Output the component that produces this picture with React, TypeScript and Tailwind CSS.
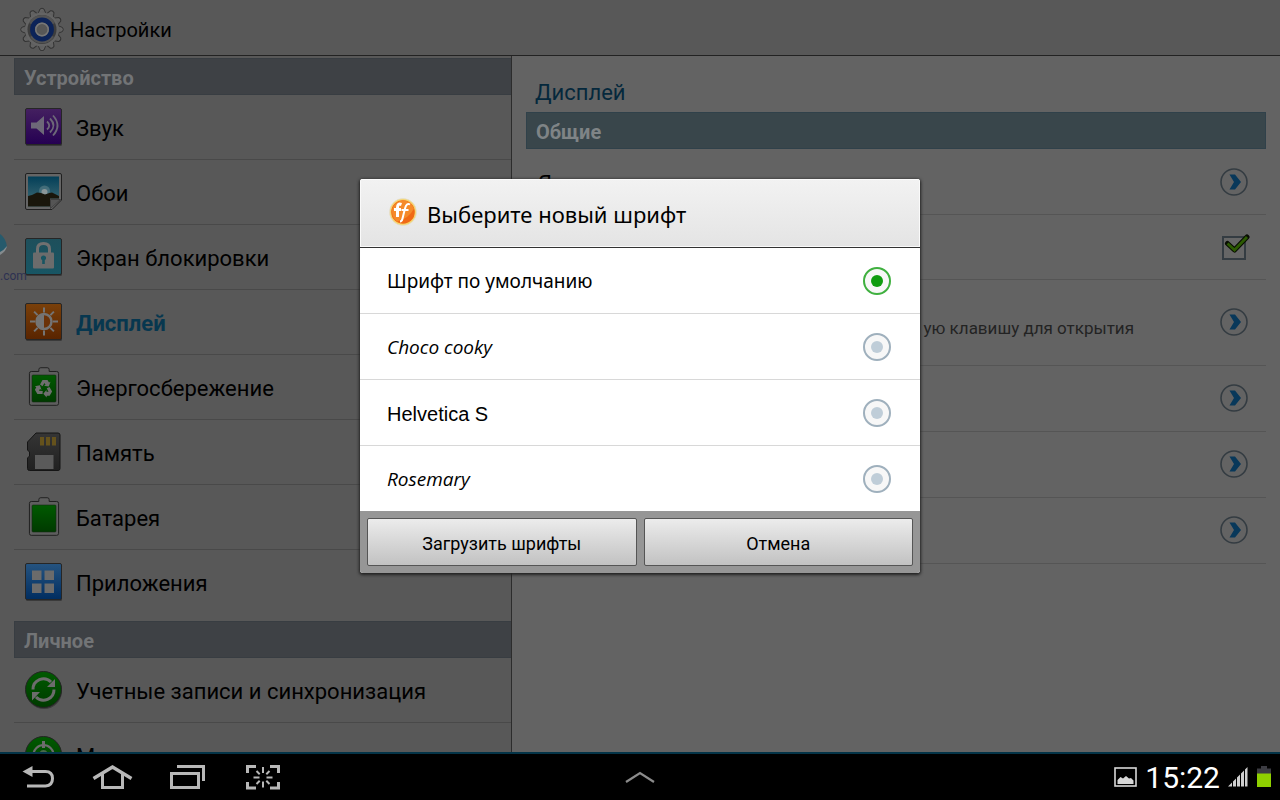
import { useState } from "react";
import type { ReactNode } from "react";

function GearIcon() {
  return (
    <svg width="44" height="44" viewBox="0 0 44 44" aria-hidden="true">
      <defs>
        <linearGradient id="gear" x1="0" y1="0" x2="1" y2="1">
          <stop offset="0" stopColor="#6a6a6a" />
          <stop offset="1" stopColor="#565656" />
        </linearGradient>
      </defs>
      <g fill="url(#gear)" stroke="#333" strokeWidth="1">
        {[0, 30, 60, 90, 120, 150, 180, 210, 240, 270, 300, 330].map((angle) => (
          <path key={angle} d="M17.5 8 20 2Q22 .4 24 2L26.500 8Z" transform={`rotate(${angle} 22 22.500)`} />
        ))}
      </g>
      <circle cx="22" cy="22.5" r="17" fill="#646464" />
      <circle cx="22" cy="22.5" r="14.5" fill="#3d3d3d" />
      <path d="M9 16a14.500 14.500 0 0 1 26 0l-13 6.500zM10 30a14.500 14.500 0 0 0 24 0l-12-7.500z" fill="#535353" />
      <circle cx="22" cy="22.5" r="9.5" fill="#5c5c5c" stroke="#0c2358" strokeWidth="4.8" />
      <circle cx="22" cy="22.5" r="6.200" fill="#575757" stroke="#777" strokeWidth="1.500" />
    </svg>
  );
}

function MenuIcon({ children }: { children: ReactNode }) {
  return (
    <svg width="40" height="40" viewBox="0 0 40 40" className="shrink-0" aria-hidden="true">
      <defs>
        <linearGradient id="purple" x1="0" y1="0" x2="0" y2="1">
          <stop offset="0" stopColor="#442060" />
          <stop offset="1" stopColor="#250052" />
        </linearGradient>
        <linearGradient id="sky" x1="0" y1="0" x2="0" y2="1">
          <stop offset="0" stopColor="#033f58" />
          <stop offset="1" stopColor="#467078" />
        </linearGradient>
        <linearGradient id="teal" x1="0" y1="0" x2="0" y2="1">
          <stop offset="0" stopColor="#1e4f5b" />
          <stop offset="1" stopColor="#185664" />
        </linearGradient>
        <linearGradient id="orange" x1="0" y1="0" x2="0" y2="1">
          <stop offset="0" stopColor="#7a400a" />
          <stop offset="1" stopColor="#592400" />
        </linearGradient>
        <linearGradient id="green" x1="0" y1="0" x2="0" y2="1">
          <stop offset="0" stopColor="#005a00" />
          <stop offset="1" stopColor="#003a00" />
        </linearGradient>
        <linearGradient id="blue" x1="0" y1="0" x2="0" y2="1">
          <stop offset="0" stopColor="#265480" />
          <stop offset="1" stopColor="#002d60" />
        </linearGradient>
        <linearGradient id="card" x1="0" y1="0" x2="0" y2="1">
          <stop offset="0" stopColor="#353535" />
          <stop offset="1" stopColor="#202020" />
        </linearGradient>
      </defs>
      {children}
    </svg>
  );
}

function Tile({ fill }: { fill: string }) {
  return (
    <>
      <rect x="2" y="3" width="36" height="36" rx="1.500" fill="#3a3a3a" />
      <rect x="1.500" y="1.500" width="36" height="36" rx="1.500" fill={fill} stroke="#262626" />
    </>
  );
}

function SoundIcon() {
  return (
    <MenuIcon>
      <Tile fill="url(#purple)" />
      <path d="M7 15.500h5.500L20 9v19l-7.500-6.500H7z" fill="#6d6878" />
      <path d="M23 14.500q4.500 4 0 8M26 11.500q7 7 0 14M29 8.500q9 10 0 20" fill="none" stroke="#6d6878" strokeWidth="1.800" />
    </MenuIcon>
  );
}

function WallpaperIcon() {
  return (
    <MenuIcon>
      <path d="M3 1.500h33q1.500 0 1.500 1.500v25L28 37.500H3Q1.500 37.500 1.500 36V3Q1.500 1.500 3 1.500z" fill="#656565" stroke="#202020" />
      <path d="M4 4.500h31v22h-9v8H4z" fill="url(#sky)" />
      <circle cx="20.500" cy="19" r="5.500" fill="#5d8188" opacity="0.600" />
      <circle cx="20.500" cy="20" r="3" fill="#8a9698" />
      <path d="M4 24q5-1 9-3.500 4 0 8 2 5-2 7-2l7 3.500v2.500h-9v8H4z" fill="#19160b" />
      <path d="M26.500 36.500v-9h10z" fill="#555" stroke="#333" strokeWidth="0.700" />
    </MenuIcon>
  );
}

function LockIcon() {
  return (
    <MenuIcon>
      <Tile fill="url(#teal)" />
      <path d="M13.500 16v-4q0-5.500 6-5.500t6 5.500v4" fill="none" stroke="#707070" strokeWidth="3" />
      <rect x="9" y="15.500" width="21" height="16" rx="1" fill="#6c6c6c" />
      <path d="M19.500 18.500a2.500 2.500 0 0 1 1.300 4.700V27h-2.600v-3.800a2.500 2.500 0 0 1 1.300-4.700z" fill="#185562" />
    </MenuIcon>
  );
}

function BrightnessIcon() {
  return (
    <MenuIcon>
      <Tile fill="url(#orange)" />
      <path
        d="M20 5.500v5M20 28.500v5M6 19.500h5M29 19.500h5M10.100 9.600l3.500 3.500M26.400 25.900l3.500 3.500M10.100 29.400l3.500-3.500M26.400 13.100l3.500-3.500"
        stroke="#747474"
        strokeWidth="2"
      />
      <circle cx="20" cy="19.500" r="7.500" fill="#6b3208" stroke="#747474" strokeWidth="2.500" />
      <path d="M20 12a7.500 7.500 0 0 0 0 15z" fill="#747474" />
    </MenuIcon>
  );
}

function BatteryShape() {
  return (
    <>
      <path
        d="M6.500 3.500h8V1.500q0-2 2-2h7q2 0 2 2v2h8q2 0 2 2v32q0 2-2 2h-27q-2 0-2-2v-32q0-2 2-2z"
        transform="translate(1.200 1.200) scale(.94)"
        fill="#5e5e5e"
        stroke="#1d1d1d"
      />
      <rect x="8" y="8" width="24" height="27" rx="1" fill="url(#green)" stroke="#152a15" strokeWidth="0.600" />
    </>
  );
}

function PowerSavingIcon() {
  return (
    <MenuIcon>
      <BatteryShape />
      <g fill="#6e6e6e">
        <path d="M16 17.500l2.500-4.500h5l1.500 2.500 1.500-.8-1.700 4.800-4.800-.8 1.500-1-1-1.700-2 3.200z" />
        <path d="M16 17.500l2.500-4.500h5l1.500 2.500 1.500-.8-1.700 4.800-4.800-.8 1.500-1-1-1.700-2 3.200z" transform="rotate(120 20 21.500)" />
        <path d="M16 17.500l2.500-4.500h5l1.500 2.500 1.500-.8-1.700 4.800-4.800-.8 1.500-1-1-1.700-2 3.200z" transform="rotate(240 20 21.500)" />
      </g>
    </MenuIcon>
  );
}

function BatteryIcon() {
  return (
    <MenuIcon>
      <BatteryShape />
    </MenuIcon>
  );
}

function MemoryIcon() {
  return (
    <MenuIcon>
      <path
        d="M12 1h22q2 0 2 2v33.500q0 2-2 2H5.500q-2 0-2-2V26l2-2v-4L3.500 18v-8z"
        fill="url(#card)"
        stroke="#151515"
      />
      <path d="M16 5h4v8.500h-4zM22 5h4v8.500h-4zM28 5h4v8.500h-4z" fill="#65521c" />
      <rect x="11" y="23" width="18.500" height="14" fill="#5a5a5a" />
    </MenuIcon>
  );
}

function AppsIcon() {
  return (
    <MenuIcon>
      <Tile fill="url(#blue)" />
      <path d="M8 8.500h9.500V18H8zM20.500 8.500H30V18h-9.500zM8 21.500h9.500V31H8zM20.500 21.500H30V31h-9.500z" fill="#6b6b6b" />
    </MenuIcon>
  );
}

function SyncIcon() {
  return (
    <MenuIcon>
      <circle cx="20" cy="21" r="18" fill="#3c3c3c" />
      <circle cx="19.500" cy="19.500" r="18" fill="url(#green)" stroke="#242424" />
      <path d="M9 19.500A10.500 10.500 0 0 1 27 12M30 19.500a10.500 10.500 0 0 1-18 7.500" fill="none" stroke="#6c6c6c" strokeWidth="3" />
      <path d="M31 9v8h-8zM8 30.500V22h8z" fill="#6c6c6c" />
    </MenuIcon>
  );
}

function LocationIcon() {
  return (
    <MenuIcon>
      <circle cx="19.500" cy="19.500" r="18" fill="url(#green)" stroke="#242424" />
      <circle cx="19.500" cy="20" r="10" fill="none" stroke="#6c6c6c" strokeWidth="2.200" />
      <path d="M19.500 6v7" stroke="#6c6c6c" strokeWidth="3" />
      <circle cx="19.500" cy="19" r="4" fill="#4a6a4a" />
    </MenuIcon>
  );
}

const deviceItems = [
  { label: "Звук", icon: <SoundIcon /> },
  { label: "Обои", icon: <WallpaperIcon /> },
  { label: "Экран блокировки", icon: <LockIcon /> },
  { label: "Дисплей", icon: <BrightnessIcon />, active: true },
  { label: "Энергосбережение", icon: <PowerSavingIcon /> },
  { label: "Память", icon: <MemoryIcon /> },
  { label: "Батарея", icon: <BatteryIcon /> },
  { label: "Приложения", icon: <AppsIcon /> },
];

const personalItems = [
  { label: "Учетные записи и синхронизация", icon: <SyncIcon /> },
  { label: "М", icon: <LocationIcon /> },
];

type Item = { label: string; icon: ReactNode; active?: boolean };

function MenuList({ title, items }: { title: string; items: Item[] }) {
  return (
    <section className="shrink-0">
      <h2 className="flex h-[37px] items-center border border-[#383d42] bg-[#3e4145] px-[9px] pt-0.5 text-[20px] font-bold text-[#727476]">
        {title}
      </h2>
      <ul>
        {items.map((item) => (
          <li key={item.label} className="border-b border-[#494949] last:border-b-0">
            <a
              href="#"
              className={
                item.active
                  ? "flex h-16 items-center gap-3 pl-[10px] text-[22px] font-bold text-[#07374f]"
                  : "flex h-16 items-center gap-3 pl-[10px] text-[22px] text-black"
              }
            >
              {item.icon}
              <span className="pt-0.5">{item.label}</span>
            </a>
          </li>
        ))}
      </ul>
    </section>
  );
}

function ChevronButton({ label }: { label: string }) {
  return (
    <button type="button" aria-label={label} className="shrink-0">
      <svg width="28" height="28" viewBox="0 0 28 28" aria-hidden="true">
        <circle cx="14" cy="14" r="13" fill="none" stroke="#343c42" strokeWidth="1.600" />
        <path d="M9.500 6.500H15L21 14l-6 7.500H9.500L14 14z" fill="#08385a" />
      </svg>
    </button>
  );
}

function DisplayPanel() {
  const [checked, setChecked] = useState(true);

  return (
    <main className="-ml-px min-w-0 flex-1 overflow-hidden border-l border-[#2c2c2c] bg-[#636363] px-[14px]">
      <h1 className="flex h-14 items-end px-[9px] pb-[3px] text-[22px] text-[#05283c]">Дисплей</h1>
      <h2 className="flex h-[37px] items-center border border-[#30414a] bg-[#39464b] px-[9px] pt-0.5 text-[20px] font-bold text-[#7f8486]">
        Общие
      </h2>
      <ul>
        <li className="flex h-[66px] items-center justify-between border-b border-[#555] pl-3 pr-[18px] text-[22px] text-black">
          <span className="pt-1">Яркость</span>
          <ChevronButton label="Открыть" />
        </li>
        <li className="flex h-[65px] items-center justify-end border-b border-[#555] pb-[3px] pr-4">
          <label className="relative block h-7 w-7">
            <input
              type="checkbox"
              aria-label="Включить"
              checked={checked}
              onChange={() => setChecked(!checked)}
              className="absolute bottom-0 left-0 m-0 h-6 w-6 appearance-none border-2 border-[#343c42] bg-[#666]"
            />
            {checked ? (
              <svg width="28" height="28" viewBox="0 0 28 28" className="absolute left-0 top-0" aria-hidden="true">
                <path d="M5.500 11.500l7 6.500L25 5" fill="none" stroke="#080d02" strokeWidth="5" strokeLinejoin="round" strokeLinecap="round" />
                <path d="M5.500 11.500l7 6.500L25 5" fill="none" stroke="#2c5a02" strokeWidth="2.800" />
              </svg>
            ) : null}
          </label>
        </li>
        <li className="flex h-[86px] items-center justify-end gap-[86px] border-b border-[#555] pb-0.5 pr-[18px] text-[17px] text-[#232323]">
          <p className="pt-[14px]">ую клавишу для открытия</p>
          <ChevronButton label="Открыть" />
        </li>
        {[1, 2, 3].map((row) => (
          <li key={row} className="flex h-[66px] items-center justify-end border-b border-[#555] pb-0.5 pr-[18px]">
            <ChevronButton label="Открыть" />
          </li>
        ))}
      </ul>
    </main>
  );
}

const fonts = [
  { name: "Шрифт по умолчанию", className: "pt-0.5 font-['Noto_Sans',sans-serif] text-[19px]" },
  { name: "Choco cooky", className: "pt-0.5 font-['Open_Sans',sans-serif] text-[19px] italic" },
  { name: "Helvetica S", className: "pt-0.5 font-['Liberation_Sans',sans-serif] text-[20px]" },
  { name: "Rosemary", className: "pt-0.5 font-['Open_Sans',sans-serif] text-[19px] italic" },
];

function FontDialog() {
  const [selected, setSelected] = useState(fonts[0].name);

  return (
    <div
      role="dialog"
      aria-labelledby="font-dialog-title"
      className="w-full max-w-[560px] overflow-hidden rounded-[3px] bg-white shadow-[0_1px_3px_1px_#222]"
    >
      <header className="flex h-[69px] items-center gap-[9px] border-b border-[#333] bg-linear-to-b from-[#f2f2f2] to-[#e4e4e4] px-7 shadow-[inset_0_0_0_1px_#fafafa]">
        <svg width="30" height="30" viewBox="0 0 30 30" aria-hidden="true">
          <circle cx="15" cy="14" r="13.500" fill="#f7d56c" stroke="#ddd" strokeWidth="0.600" />
          <circle cx="15" cy="14" r="11.800" fill="#f06a16" />
          <path d="M15 2.500a11.500 11.500 0 0 1 11 8q-5 10-17 13A11.500 11.500 0 0 1 15 2.500z" fill="#f58a2a" />
          <path d="M13.500 6.500q-4-1.500-4 3V19M6 11.500h7" fill="none" stroke="#fff" strokeWidth="3" />
          <path d="M22 6.500q-3.500-2-5 4l-2.500 10q-.6 3-2.500 3M13.500 12h7" fill="none" stroke="#fff" strokeWidth="2" />
        </svg>
        <h2 id="font-dialog-title" className="pt-0.5 font-['Noto_Sans',sans-serif] text-[22px] text-black">
          Выберите новый шрифт
        </h2>
      </header>
      <div>
        {fonts.map((font) => (
          <label
            key={font.name}
            className="flex h-[66px] items-center justify-between border-b border-[#d8d8d8] pl-[27px] pr-[29px] text-black last:h-[65px] last:border-b-0"
          >
            <span className={font.className}>{font.name}</span>
            <input
              type="radio"
              name="font"
              checked={selected === font.name}
              onChange={() => setSelected(font.name)}
              className="grid h-7 w-7 appearance-none place-content-center rounded-full border-2 border-[#9fb0bd] bg-[#f7f7f7] before:h-3 before:w-3 before:rounded-full before:bg-[#bfcdd8] checked:border-[#3fb03f] checked:before:bg-[#109c10]"
            />
          </label>
        ))}
      </div>
      <footer className="flex h-[62px] gap-[7px] bg-[#969696] p-[7px]">
        <button
          type="button"
          className="h-12 flex-1 rounded-[2px] border border-[#555] bg-linear-to-b from-[#ececec] to-[#c2c2c2] pt-0.5 text-[18px] text-black"
        >
          Загрузить шрифты
        </button>
        <button
          type="button"
          className="h-12 flex-1 rounded-[2px] border border-[#555] bg-linear-to-b from-[#ececec] to-[#c2c2c2] pt-0.5 text-[18px] text-black"
        >
          Отмена
        </button>
      </footer>
    </div>
  );
}

function SystemBar() {
  return (
    <footer className="grid h-12 shrink-0 grid-cols-3 items-center border-t-2 border-[#043448] bg-black">
      <nav className="flex items-center gap-9 pl-[22px]">
        <button type="button" aria-label="Назад">
          <svg width="34" height="26" viewBox="0 0 34 26" aria-hidden="true">
            <path d="M8 7.500h15.500q7 0 7 7T23.500 22H5" fill="none" stroke="#b8b8b8" strokeWidth="3" />
            <path d="M.5 7.500L10.500 2v11z" fill="#b8b8b8" />
          </svg>
        </button>
        <button type="button" aria-label="Домой">
          <svg width="41" height="26" viewBox="0 0 41 26" aria-hidden="true">
            <path d="M1.500 14.500L20.500 3l19 11.500" fill="none" stroke="#b8b8b8" strokeWidth="3.400" />
            <path d="M10.500 10v13.500h20V10" fill="none" stroke="#b8b8b8" strokeWidth="3" />
          </svg>
        </button>
        <button type="button" aria-label="Последние приложения">
          <svg width="37" height="26" viewBox="0 0 37 26" aria-hidden="true">
            <path d="M2.500 9.500h27v14h-27z" fill="none" stroke="#b8b8b8" strokeWidth="3" />
            <path d="M8 2.500h26.500V17" fill="none" stroke="#b8b8b8" strokeWidth="3" />
          </svg>
        </button>
        <button type="button" aria-label="Снимок экрана">
          <svg width="41" height="26" viewBox="0 0 41 26" aria-hidden="true">
            <g transform="translate(4 0)" fill="none" stroke="#b8b8b8">
              <path d="M1.500 9V2.500h8.500M24 2.500h8.500V9M1.500 18v6H10M24 24h8.500v-6" strokeWidth="3" />
              <path d="M17 3v6M17 17.500v6M7.500 13.500h6M20.500 13.500h6M10.500 7l3.200 3.200M20.300 16.800l3.200 3.200M10.500 20l3.200-3.200M20.300 10.200L23.500 7" strokeWidth="2" />
            </g>
          </svg>
        </button>
      </nav>
      <button type="button" aria-label="Мини-приложения" className="justify-self-center">
        <svg width="32" height="14" viewBox="0 0 32 14" aria-hidden="true">
          <path d="M2 12L16 3l14 9" fill="none" stroke="#8b8b8b" strokeWidth="2.200" />
        </svg>
      </button>
      <div className="flex items-center justify-end gap-2 pr-2">
        <svg width="24" height="22" viewBox="0 0 24 22" aria-hidden="true">
          <rect x="2" y="2" width="21" height="18" fill="none" stroke="#d8d8d8" strokeWidth="1.600" />
          <path d="M4.500 18v-4l3-3 2.500 1.500 3-2.500 3 2.500 2-.5 2.500 2.500V18z" fill="#d8d8d8" />
        </svg>
        <time className="pt-0.5 text-[30px] leading-none text-white">15:22</time>
        <svg width="20" height="20" viewBox="0 0 20 20" aria-hidden="true">
          <path d="M0 19.500l4-4v4zM5 14.500l3-3v8H5zM9 10.500l3-3v12H9zM13 6.500l3-3v16h-3zM17 2.500l2.500-2.500v19.500H17z" fill="#d0d0d0" />
        </svg>
        <svg width="16" height="22" viewBox="0 0 16 22" aria-hidden="true">
          <path d="M1 2.500h4V0h6v2.500h4V8H1z" fill="#3c3c42" />
          <path d="M1 7.500h14V21H1z" fill="#8fd000" />
        </svg>
      </div>
    </footer>
  );
}

export default function App() {
  return (
    <div className="relative flex h-screen flex-col overflow-hidden bg-[#585858] font-[Roboto,sans-serif]">
      <header className="flex h-14 shrink-0 items-center gap-[6px] border-b border-[#222] bg-[#585858] pl-5 pt-0.5 text-[20px] text-black">
        <GearIcon />
        <span className="pt-0.5">Настройки</span>
      </header>
      <div className="flex min-h-0 flex-1">
        <aside className="flex w-2/5 flex-col gap-[7px] overflow-hidden pl-[14px] pt-[2px]">
          <MenuList title="Устройство" items={deviceItems} />
          <MenuList title="Личное" items={personalItems} />
        </aside>
        <DisplayPanel />
      </div>
      <SystemBar />

      <div className="absolute left-0 top-[234px] w-7 overflow-hidden text-[#2d3152]">
        <svg width="8" height="24" viewBox="0 0 8 24" aria-hidden="true">
          <path d="M0 0q6 4 7 13L0 20z" fill="#265a6c" />
          <path d="M0 18q4-2 7-6-.5 5-7 9z" fill="#858b8e" />
        </svg>
        <p className="pt-2 text-[12px] leading-5">.com</p>
      </div>

      <div className="absolute inset-x-0 bottom-12 top-0 flex items-center justify-center">
        <FontDialog />
      </div>
    </div>
  );
}
